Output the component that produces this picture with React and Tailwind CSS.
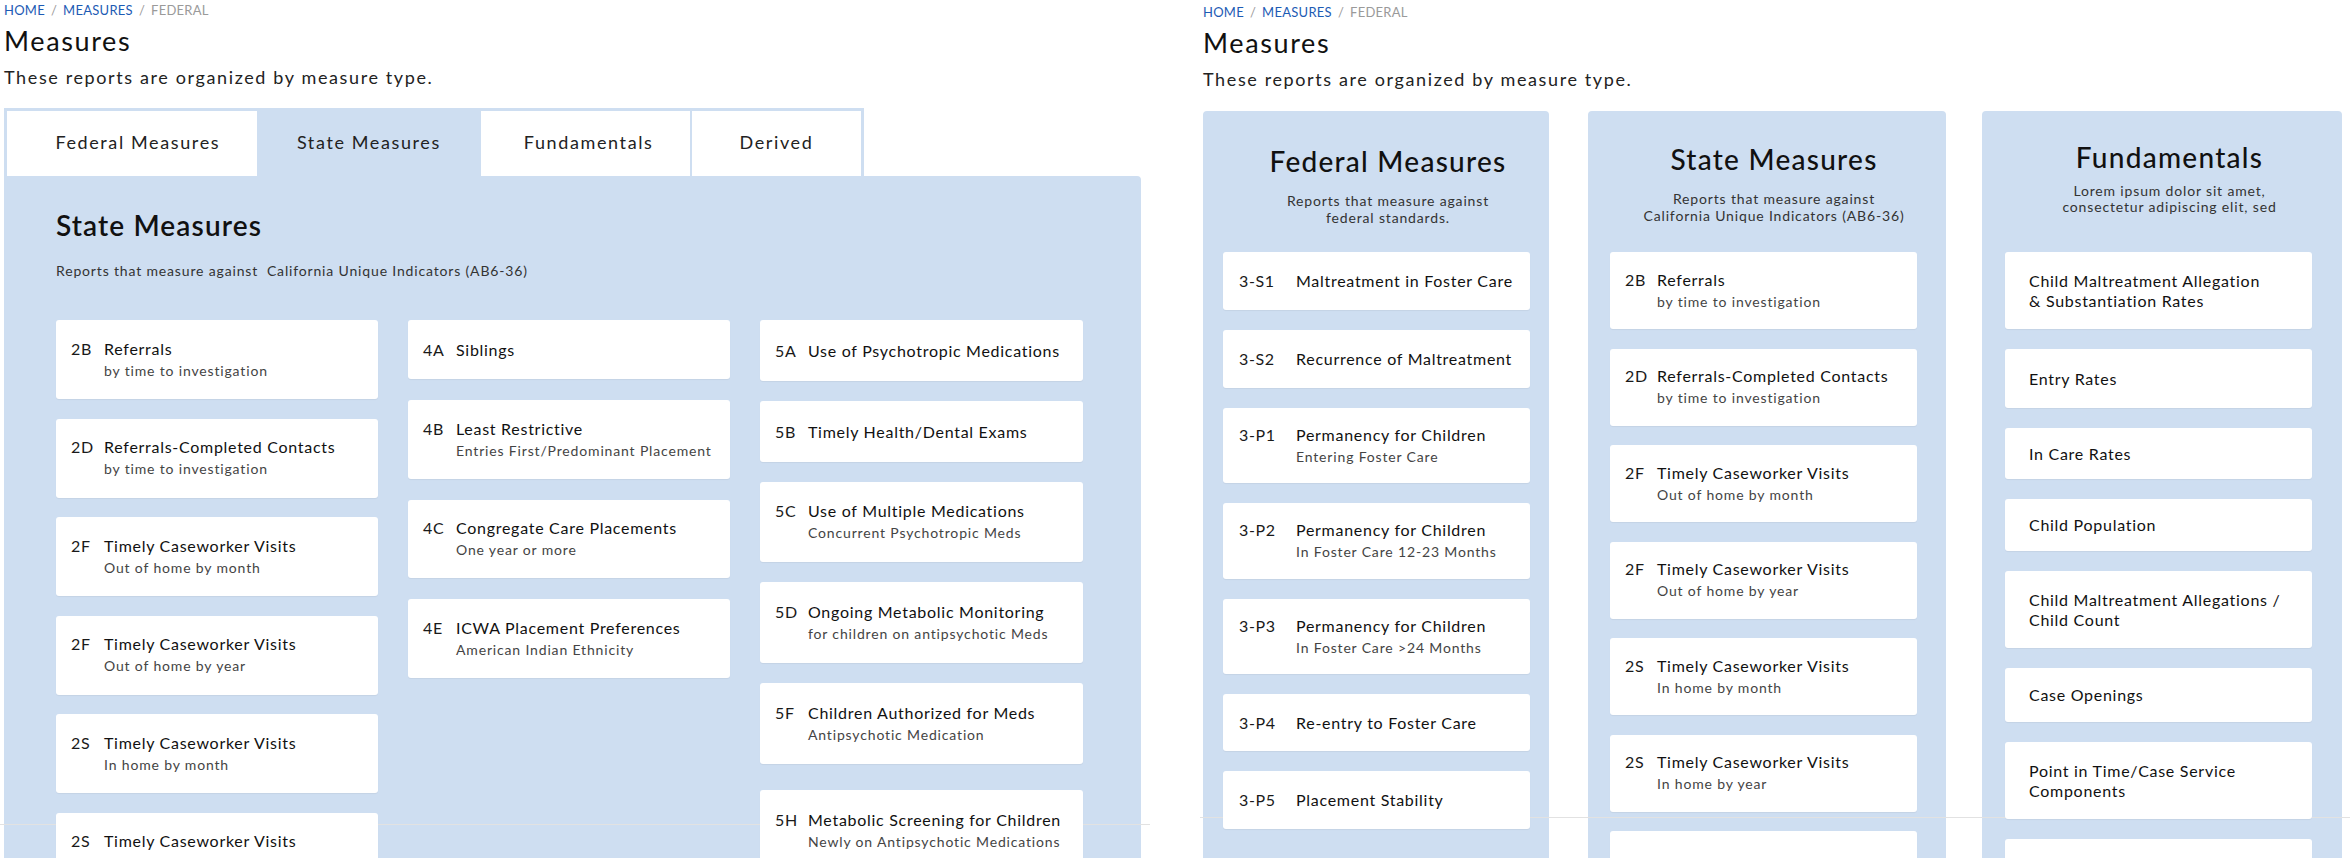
import React from "react";

const font = "font-['Lato','Open_Sans',sans-serif]";
const panelBg = "bg-[#cedef1]";

// Left screenshot: tabbed view
const tabs = [
  { label: "Federal Measures", w: "w-[251px] pl-[12px]", active: false },
  { label: "State Measures", w: "w-[222px]", active: true },
  { label: "Fundamentals", w: "w-[210px] pl-[6px]", active: false },
  { label: "Derived", w: "w-[170px]", active: false },
];

const stateCols = [
  [
    { code: "2B", title: "Referrals", sub: "by time to investigation", h: "h-[79px]" },
    { code: "2D", title: "Referrals-Completed Contacts", sub: "by time to investigation", h: "h-[79px]" },
    { code: "2F", title: "Timely Caseworker Visits", sub: "Out of home by month", h: "h-[79px]" },
    { code: "2F", title: "Timely Caseworker Visits", sub: "Out of home by year", h: "h-[79px]" },
    { code: "2S", title: "Timely Caseworker Visits", sub: "In home by month", h: "h-[79px]" },
    { code: "2S", title: "Timely Caseworker Visits", sub: "In home by year", h: "h-[79px]" },
  ],
  [
    { code: "4A", title: "Siblings", h: "h-[59px]" },
    { code: "4B", title: "Least Restrictive", sub: "Entries First/Predominant Placement", h: "h-[79px]" },
    { code: "4C", title: "Congregate Care Placements", sub: "One year or more", h: "h-[78px]" },
    { code: "4E", title: "ICWA Placement Preferences", sub: "American Indian Ethnicity", h: "h-[79px]" },
  ],
  [
    { code: "5A", title: "Use of Psychotropic Medications", h: "h-[61px]" },
    { code: "5B", title: "Timely Health/Dental Exams", h: "h-[61px]" },
    { code: "5C", title: "Use of Multiple Medications", sub: "Concurrent Psychotropic Meds", h: "h-[80px]" },
    { code: "5D", title: "Ongoing Metabolic Monitoring", sub: "for children on antipsychotic Meds", h: "h-[81px]" },
    { code: "5F", title: "Children Authorized for Meds", sub: "Antipsychotic Medication", h: "h-[81px]" },
    { code: "5H", title: "Metabolic Screening for Children", sub: "Newly on Antipsychotic Medications", h: "h-[81px] mt-[6px]" },
  ],
];

// Right screenshot: column overview
const federalCards = [
  { code: "3-S1", title: "Maltreatment in Foster Care", h: "h-[58px]" },
  { code: "3-S2", title: "Recurrence of Maltreatment", h: "h-[58px]" },
  { code: "3-P1", title: "Permanency for Children", sub: "Entering Foster Care", h: "h-[75px]" },
  { code: "3-P2", title: "Permanency for Children", sub: "In Foster Care 12-23 Months", h: "h-[76px]" },
  { code: "3-P3", title: "Permanency for Children", sub: "In Foster Care >24 Months", h: "h-[75px]" },
  { code: "3-P4", title: "Re-entry to Foster Care", h: "h-[57px]" },
  { code: "3-P5", title: "Placement Stability", h: "h-[58px]" },
];

const stateCards = [
  { code: "2B", title: "Referrals", sub: "by time to investigation" },
  { code: "2D", title: "Referrals-Completed Contacts", sub: "by time to investigation" },
  { code: "2F", title: "Timely Caseworker Visits", sub: "Out of home by month" },
  { code: "2F", title: "Timely Caseworker Visits", sub: "Out of home by year" },
  { code: "2S", title: "Timely Caseworker Visits", sub: "In home by month" },
  { code: "2S", title: "Timely Caseworker Visits", sub: "In home by year" },
  { code: "4A", title: "Siblings" },
];

const fundamentals = [
  { lines: ["Child Maltreatment Allegation", "& Substantiation Rates"], h: "h-[77px]" },
  { lines: ["Entry Rates"], h: "h-[59px]" },
  { lines: ["In Care Rates"], h: "h-[51px]" },
  { lines: ["Child Population"], h: "h-[52px]" },
  { lines: ["Child Maltreatment Allegations /", "Child Count"], h: "h-[77px]" },
  { lines: ["Case Openings"], h: "h-[54px]" },
  { lines: ["Point in Time/Case Service", "Components"], h: "h-[77px]" },
  { lines: ["Placement Counts"], h: "h-[58px]" },
];

function PageHeader({ top }) {
  return (
    <div className={top}>
      <div className="text-[13px] leading-[20px] tracking-[0.02em]">
        <span className="text-[#1d5bb4]">HOME</span>
        <span className="text-[#9a9a9a] mx-[6px]">/</span>
        <span className="text-[#1d5bb4]">MEASURES</span>
        <span className="text-[#9a9a9a] mx-[6px]">/</span>
        <span className="text-[#9a9a9a]">FEDERAL</span>
      </div>
      <h1 className="mt-[5px] text-[27px] leading-[32px] tracking-[0.06em] text-[#111]">Measures</h1>
      <p className="mt-[8px] text-[18px] leading-[24px] tracking-[0.09em] text-[#222]">
        These reports are organized by measure type.
      </p>
    </div>
  );
}

function Card({ item, codeW, pad, w }) {
  return (
    <div className={`relative z-10 ${w} ${item.h} flex items-center bg-white rounded-[3px] shadow-[0_1px_1px_rgba(0,0,0,0.05)] ${pad}`}>
      <div className="flex">
        <span className={`${codeW} shrink-0 text-[16px] leading-[20px] tracking-[0.04em] text-[#1a1a1a]`}>
          {item.code}
        </span>
        <div>
          <div className="text-[16px] leading-[20px] tracking-[0.045em] text-[#111]">{item.title}</div>
          {item.sub && (
            <div className="mt-[2px] text-[14px] leading-[20px] tracking-[0.06em] text-[#444]">{item.sub}</div>
          )}
        </div>
      </div>
    </div>
  );
}

function LeftView() {
  return (
    <div className="relative w-[1150px] shrink-0 pl-[4px]">
      <PageHeader top="pt-0" />
      <div className={`mt-[19px] flex w-[860px] h-[68px] ${panelBg} pt-[3px] px-[3px] gap-[2px]`}>
        {tabs.map((t) => (
          <div
            key={t.label}
            className={`${t.w} flex items-center justify-center pb-[2px] text-[18px] tracking-[0.09em] text-[#222] ${
              t.active ? panelBg : "bg-white"
            }`}
          >
            {t.label}
          </div>
        ))}
      </div>
      <div className={`w-[1137px] h-[700px] ${panelBg} rounded-tr-[4px] pl-[52px] pt-[31px]`}>
        <h2 className="text-[28px] leading-[36px] font-semibold tracking-[0.04em] text-[#111]">State Measures</h2>
        <p className="mt-[19px] text-[14px] leading-[18px] tracking-[0.06em] text-[#333]">
          Reports that measure against&nbsp; California Unique Indicators (AB6-36)
        </p>
        <div className="mt-[40px] flex gap-[30px]">
          {stateCols.map((col, i) => (
            <div key={i} className={`flex flex-col ${i === 0 ? "gap-[19.5px]" : i === 1 ? "gap-[21px]" : "gap-[20px]"}`}>
              {col.map((item, j) => (
                <Card key={j} item={item} codeW="w-[33px]" pad="pl-[15px]" w={i === 2 ? "w-[323px]" : "w-[322px]"} />
              ))}
            </div>
          ))}
        </div>
      </div>
      <div className="absolute top-[824px] left-0 w-[1150px] h-px bg-[#e2e2e2]" />
    </div>
  );
}

function ColumnHead({ title, lines, headTop, subTop, subLead, shift }) {
  return (
    <div className={`h-[141px] text-center ${shift}`}>
      <h2 className={`${headTop} text-[28px] leading-[36px] font-medium tracking-[0.045em] text-[#111]`}>{title}</h2>
      <p className={`${subTop} ${subLead} text-[14px] tracking-[0.06em] text-[#333]`}>
        {lines[0]}
        <br />
        {lines[1]}
      </p>
    </div>
  );
}

function RightView() {
  return (
    <div className="relative flex-1 pl-[3px]">
      <PageHeader top="pt-[2px]" />
      <div className="mt-[20px] flex items-start">
        <div className={`w-[346px] h-[760px] ${panelBg} rounded-t-[4px] pl-[20px]`}>
          <ColumnHead
            title="Federal Measures"
            lines={["Reports that measure against", "federal standards."]}
            headTop="pt-[32px]"
            subTop="mt-[13px]"
            subLead="leading-[17px]"
            shift="pl-[4px]"
          />
          <div className="flex flex-col gap-[20px]">
            {federalCards.map((item, j) => (
              <Card key={j} item={item} codeW="w-[57px]" pad="pl-[16px]" w="w-[307px]" />
            ))}
          </div>
        </div>
        <div className={`ml-[39px] w-[358px] h-[760px] ${panelBg} rounded-t-[4px] pl-[22px]`}>
          <ColumnHead
            title="State Measures"
            lines={["Reports that measure against", "California Unique Indicators (AB6-36)"]}
            headTop="pt-[30px]"
            subTop="mt-[13px]"
            subLead="leading-[17px]"
            shift="pr-[8px]"
          />
          <div className="flex flex-col gap-[19.5px]">
            {stateCards.map((item, j) => (
              <Card key={j} item={{ ...item, h: "h-[77px]" }} codeW="w-[32px]" pad="pl-[15px]" w="w-[307px]" />
            ))}
          </div>
        </div>
        <div className={`ml-[36px] w-[360px] h-[760px] ${panelBg} rounded-t-[4px] pl-[23px]`}>
          <ColumnHead
            title="Fundamentals"
            lines={["Lorem ipsum dolor sit amet,", "consectetur adipiscing elit, sed"]}
            headTop="pt-[28px]"
            subTop="mt-[8px]"
            subLead="leading-[16px]"
            shift="pr-[8px]"
          />
          <div className="flex flex-col gap-[20px]">
            {fundamentals.map((f, j) => (
              <div
                key={j}
                className={`relative z-10 w-[307px] ${f.h} flex items-center bg-white rounded-[3px] shadow-[0_1px_1px_rgba(0,0,0,0.05)] pl-[24px]`}
              >
                <div className="text-[16px] leading-[20px] tracking-[0.045em] text-[#111]">
                  {f.lines.map((l, k) => (
                    <div key={k}>{l}</div>
                  ))}
                </div>
              </div>
            ))}
          </div>
        </div>
      </div>
      <div className="absolute top-[817px] left-0 right-0 h-px bg-[#e2e2e2]" />
    </div>
  );
}

export default function App() {
  return (
    <div className={`${font} w-[2350px] h-[858px] overflow-hidden bg-white flex`}>
      <LeftView />
      <div className="w-[50px] shrink-0" />
      <RightView />
    </div>
  );
}
